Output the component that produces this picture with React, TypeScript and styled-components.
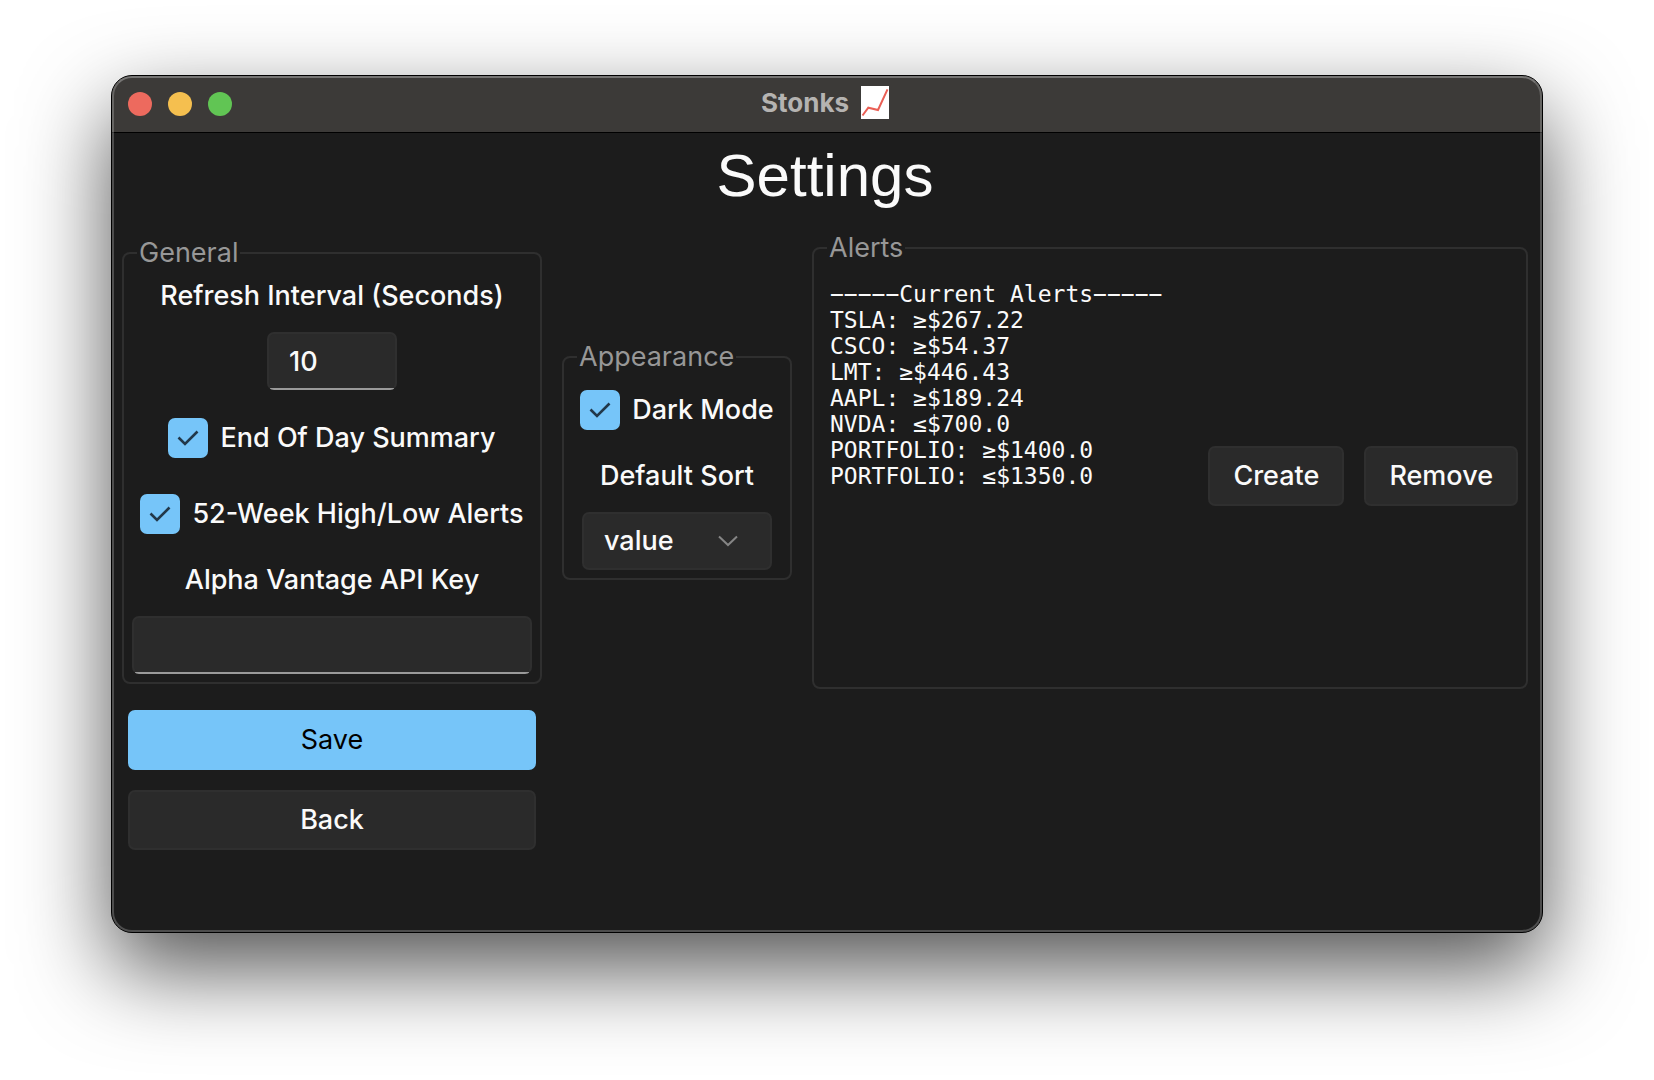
import React, { useId, useState } from 'react';
import styled, { createGlobalStyle } from 'styled-components';

const color = {
  window: '#1c1c1c',
  titleBar: '#3c3a38',
  line: '#2f2f2f',
  control: '#2a2a2a',
  controlEdge: '#2f2f2f',
  underline: '#9a9a9a',
  text: '#fafafa',
  muted: '#979797',
  accent: '#76c5f9',
};

const sans = `Inter, "Liberation Sans", sans-serif`;

const GlobalStyle = createGlobalStyle`
  *, *::before, *::after { box-sizing: border-box; }
  body { margin: 0; background: #fff; }
  button, input, select { font: inherit; color: inherit; margin: 0; }
`;

const Desktop = styled.div`
  display: flex;
  min-height: 100vh;
  padding: 75px 111px 147px;
  overflow: hidden;
  font-family: ${sans};
  font-size: 27px;
  font-weight: 500;
  line-height: 34px;
  color: ${color.text};
`;

const Window = styled.div`
  position: relative;
  flex: 1;
  display: flex;
  flex-direction: column;
  border: 1px solid #000;
  border-radius: 21px;
  background: ${color.window};
  box-shadow: 0 36px 88px rgba(0, 0, 0, 0.68);

  &::after {
    content: '';
    position: absolute;
    inset: 0;
    border: 2px solid rgba(255, 255, 255, 0.22);
    border-top-color: rgba(255, 255, 255, 0.3);
    border-radius: 20px;
    pointer-events: none;
  }
`;

const TitleBar = styled.header`
  display: grid;
  grid-template-columns: 1fr auto 1fr;
  align-items: center;
  height: 57px;
  padding: 0 16px;
  border-bottom: 1px solid #000;
  border-radius: 20px 20px 0 0;
  background: ${color.titleBar};
`;

const Lights = styled.div`
  display: flex;
  gap: 16px;
`;

const Light = styled.button<{ $fill: string }>`
  width: 24px;
  height: 24px;
  padding: 0;
  border: 0;
  border-radius: 50%;
  background: ${(p) => p.$fill};
`;

const WindowTitle = styled.div`
  display: flex;
  align-items: center;
  gap: 12px;
  padding: 0 4px 3px 0;
  font-size: 26px;
  font-weight: 700;
  color: #b5b3b1;
`;

const Content = styled.main`
  flex: 1;
  padding: 0 14px 0 10px;
`;

const Heading = styled.h1`
  margin: 0 0 12px;
  font-family: "Liberation Sans", Arial, sans-serif;
  font-size: 60px;
  font-weight: 400;
  line-height: 86px;
  text-align: center;
`;

const Columns = styled.form`
  display: grid;
  grid-template-columns: 420px 230px minmax(0, 1fr);
  align-items: center;
  gap: 21px 20px;
`;

const Group = styled.fieldset`
  min-width: 0;
  margin: 0;
  padding: 8px;
  border: 2px solid ${color.line};
  border-radius: 8px;
`;

const GroupTitle = styled.legend`
  margin-left: 5px;
  padding: 0 2px;
  font-weight: 400;
  color: ${color.muted};
`;

const Stack = styled.div`
  display: flex;
  flex-direction: column;
  align-items: center;
  gap: 20px;
`;

const FieldLabel = styled.label`
  padding-top: 2px;
  line-height: 32px;
`;

const TextField = styled.input<{ $width: string }>`
  width: ${(p) => p.$width};
  height: 58px;
  padding: 0 20px;
  border: 2px solid ${color.controlEdge};
  border-bottom-color: transparent;
  border-radius: 7px;
  background-color: ${color.control};
  background-image: linear-gradient(${color.underline}, ${color.underline});
  background-origin: border-box;
  background-position: center bottom;
  background-size: calc(100% - 6px) 2px;
  background-repeat: no-repeat;
  outline: none;
`;

const CheckLabel = styled.label`
  display: flex;
  align-items: center;
  gap: 12px;
  height: 56px;
  white-space: nowrap;
`;

const Overlay = styled.span`
  display: grid;
  align-items: center;

  > * {
    grid-area: 1 / 1;
  }

  > svg {
    pointer-events: none;
  }
`;

const Tick = styled.input`
  appearance: none;
  width: 40px;
  height: 40px;
  border: 2px solid #8a8a8a;
  border-radius: 7px;

  &:checked {
    border: 0;
    background: ${color.accent};
  }

  &:not(:checked) + svg {
    visibility: hidden;
  }
`;

const Picker = styled.select`
  appearance: none;
  width: 190px;
  height: 58px;
  padding: 0 20px;
  border: 2px solid ${color.controlEdge};
  border-radius: 7px;
  background: ${color.control};
`;

const Chevron = styled.svg`
  justify-self: end;
  margin-right: 34px;
`;

const Button = styled.button<{ $accent?: boolean }>`
  height: 60px;
  padding: 0 23px;
  border: 2px solid ${(p) => (p.$accent ? color.accent : color.controlEdge)};
  border-radius: 7px;
  background: ${(p) => (p.$accent ? color.accent : color.control)};
  color: ${(p) => (p.$accent ? '#000' : color.text)};
  font-weight: ${(p) => (p.$accent ? 400 : 500)};
`;

const AlertsBody = styled.div`
  display: flex;
  align-items: center;
  justify-content: space-between;
  min-height: 406px;
`;

const AlertList = styled.pre`
  align-self: flex-start;
  margin: 0;
  padding: 8px;
  font-family: "DejaVu Sans Mono", monospace;
  font-size: 23px;
  font-weight: 400;
  line-height: 26px;
`;

const ButtonRow = styled.div`
  display: flex;
  gap: 20px;
`;

const Actions = styled.div`
  display: flex;
  flex-direction: column;
  gap: 20px;
  padding: 0 6px;
`;

const alerts = [
  'TSLA: ≥$267.22',
  'CSCO: ≥$54.37',
  'LMT: ≥$446.43',
  'AAPL: ≥$189.24',
  'NVDA: ≤$700.0',
  'PORTFOLIO: ≥$1400.0',
  'PORTFOLIO: ≤$1350.0',
];

function ChartIcon() {
  return (
    <svg width="28" height="33" viewBox="0 0 28 33" role="img" aria-label="Chart">
      <rect width="28" height="33" fill="#fff" />
      <path d="M1.5 29.5 7.3 21.7 17 24 26.5 3.3" fill="none" stroke="#ea5f55" strokeWidth="2" />
    </svg>
  );
}

function CheckField({ label }: { label: string }) {
  const id = useId();
  const [checked, setChecked] = useState(true);
  return (
    <CheckLabel htmlFor={id}>
      <Overlay>
        <Tick id={id} type="checkbox" checked={checked} onChange={(e) => setChecked(e.target.checked)} />
        <svg width="40" height="40" viewBox="0 0 40 40" aria-hidden="true">
          <path d="M10.5 19.5 17 26 29.5 13.5" fill="none" stroke="#22384a" strokeWidth="2.6" />
        </svg>
      </Overlay>
      {label}
    </CheckLabel>
  );
}

export default function App() {
  const [interval, setRefresh] = useState('10');
  const [apiKey, setApiKey] = useState('');
  return (
    <Desktop>
      <GlobalStyle />
      <Window>
        <TitleBar>
          <Lights>
            <Light type="button" aria-label="Close" $fill="#ed6a5e" />
            <Light type="button" aria-label="Minimize" $fill="#f5bf4f" />
            <Light type="button" aria-label="Zoom" $fill="#61c554" />
          </Lights>
          <WindowTitle>
            Stonks
            <ChartIcon />
          </WindowTitle>
        </TitleBar>
        <Content>
          <Heading>Settings</Heading>
          <Columns onSubmit={(e) => e.preventDefault()}>
            <Group>
              <GroupTitle>General</GroupTitle>
              <Stack>
                <FieldLabel htmlFor="refresh">Refresh Interval (Seconds)</FieldLabel>
                <TextField id="refresh" $width="130px" value={interval} onChange={(e) => setRefresh(e.target.value)} />
                <CheckField label="End Of Day Summary" />
                <CheckField label="52-Week High/Low Alerts" />
                <FieldLabel htmlFor="api-key">Alpha Vantage API Key</FieldLabel>
                <TextField id="api-key" $width="100%" value={apiKey} onChange={(e) => setApiKey(e.target.value)} />
              </Stack>
            </Group>
            <Group>
              <GroupTitle>Appearance</GroupTitle>
              <Stack>
                <CheckField label="Dark Mode" />
                <FieldLabel htmlFor="sort">Default Sort</FieldLabel>
                <Overlay>
                  <Picker id="sort" defaultValue="value">
                    <option value="value">value</option>
                    <option value="name">name</option>
                  </Picker>
                  <Chevron width="20" height="12" viewBox="0 0 20 12" aria-hidden="true">
                    <path d="M1 1.5 10 10 19 1.5" fill="none" stroke="#858585" strokeWidth="2" />
                  </Chevron>
                </Overlay>
              </Stack>
            </Group>
            <Group>
              <GroupTitle>Alerts</GroupTitle>
              <AlertsBody>
                <AlertList>{['−−−−−Current Alerts−−−−−', ...alerts].join('\n')}</AlertList>
                <ButtonRow>
                  <Button type="button">Create</Button>
                  <Button type="button">Remove</Button>
                </ButtonRow>
              </AlertsBody>
            </Group>
            <Actions>
              <Button type="submit" $accent>
                Save
              </Button>
              <Button type="button">Back</Button>
            </Actions>
          </Columns>
        </Content>
      </Window>
    </Desktop>
  );
}
